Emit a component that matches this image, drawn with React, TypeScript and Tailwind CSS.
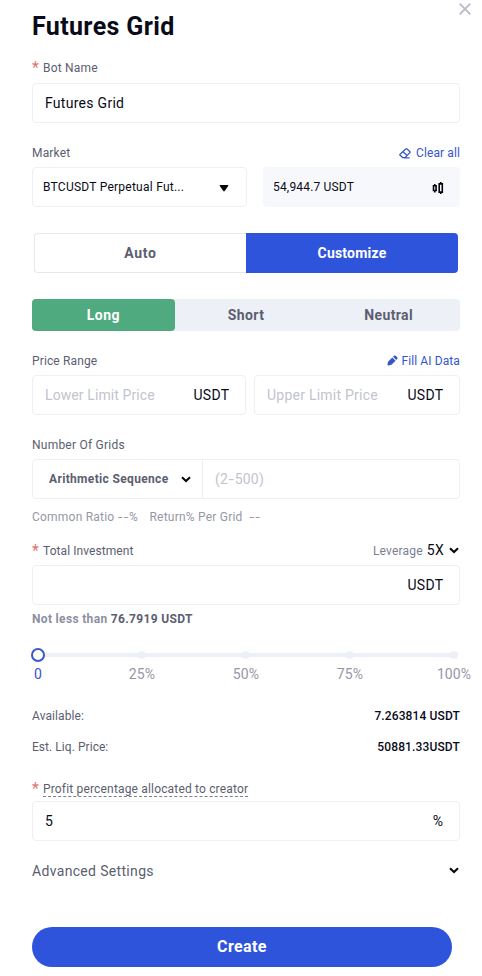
import type { ReactNode } from 'react';

const marks = ['0', '25%', '50%', '75%', '100%'];

function Chevron({ className = '' }: { className?: string }) {
  return (
    <svg viewBox="0 0 10 7" className={`w-2.5 h-[7px] ${className}`} fill="none" stroke="#05060f" strokeWidth="2">
      <path d="M1 1.2 5 5l4-3.8" />
    </svg>
  );
}

function Label({ children, required }: { children: ReactNode; required?: boolean }) {
  return (
    <span className="flex h-5 items-center text-xs leading-5 text-[#5b5e70]">
      {required && <span className="w-[11px] text-base text-[#e2746f]">*</span>}
      {children}
    </span>
  );
}

function Field({ children, className = '' }: { children?: ReactNode; className?: string }) {
  return (
    <div
      className={`flex h-10 items-center justify-between rounded border border-[#eeeff3] text-sm text-[#0a0b18] ${className}`}
    >
      {children}
    </div>
  );
}

function Unit({ children }: { children: ReactNode }) {
  return <span className="-mr-[0.25px] tracking-[0.25px]">{children}</span>;
}

export default function App() {
  return (
    <div className="h-[976px] w-[482px] overflow-hidden bg-white pl-8 font-['Roboto','Noto_Sans',sans-serif] text-[#0a0b18]">
      <button className="absolute left-[459px] top-[3px]" aria-label="Close">
        <svg viewBox="0 0 12 12" className="h-3 w-3" fill="none" stroke="#b9bbc9" strokeWidth="1.8">
          <path d="M.7.7l10.6 10.6M11.3.7.7 11.3" />
        </svg>
      </button>

      <div className="w-[428px]">
        <h1 className="pt-[11px] text-[25px] font-bold leading-8 tracking-[0.36px]">Futures Grid</h1>

        {/* Bot name */}
        <div className="mt-[15px]">
          <Label required>
            <span className="tracking-[0.2px]">Bot Name</span>
          </Label>
          <Field className="mt-[5px] px-3">
            <span className="tracking-[0.28px]">Futures Grid</span>
          </Field>
        </div>

        {/* Market */}
        <div className="mt-5">
          <div className="flex justify-between">
            <Label>
              <span className="tracking-[0.17px]">Market</span>
            </Label>
            <button className="flex h-5 items-center text-xs text-[#3556c9]">
              <svg viewBox="0 0 12 11" className="mr-[5px] h-[11px] w-3" fill="none" stroke="currentColor" strokeWidth="1.3">
                <path d="M1.1 6.2 6.7 1.1q.7-.6 1.4 0l2.6 2.4q.7.7 0 1.4L5.9 9.6H3.7L1.1 7.3q-.5-.5 0-1.1zM3.9 3.7l4.3 3.9M5 9.9h5.6" />
              </svg>
              <span className="tracking-[0.1px]">Clear all</span>
            </button>
          </div>
          <div className="mt-1 flex justify-between text-xs">
            <Field className="w-[215px] pl-2.5 pr-[18px]">
              <span className="text-xs tracking-[0.25px]">BTCUSDT Perpetual Fut...</span>
              <svg viewBox="0 0 10 7" className="-mr-px mt-0.5 h-[7px] w-2.5 fill-[#05060f]">
                <path d="M1.2 0h7.6q1 .1.4.9L5.7 6q-.7.9-1.4 0L.8.9Q.2.1 1.2 0z" />
              </svg>
            </Field>
            <div className="flex h-10 w-[197px] items-center justify-between rounded bg-[#f7f8fb] pl-2.5 pr-4">
              <span className="tracking-[0.18px]">54,944.7 USDT</span>
              <svg viewBox="0 0 12 12" className="mt-0.5 h-3 w-3" fill="none" stroke="#05060f" strokeWidth="1.6">
                <path d="M1.5 3.7h2.6v4.8H1.5zM2.8 1.9v1.8M2.8 8.5v1.9M7.2 1.9h3.1v8.2H7.2zM8.75.1v1.8M8.75 10.1v1.8" />
              </svg>
            </div>
          </div>
        </div>

        {/* Mode tabs */}
        <div className="ml-0.5 mt-[26px] flex h-10 w-[424px] text-sm font-bold">
          <button className="w-[212px] rounded-l border border-r-0 border-[#e6e8f0] tracking-[0.7px] text-[#5b5e70]">Auto</button>
          <button className="w-[212px] rounded-r bg-[#2f54dc] tracking-[0.2px] text-white">Customize</button>
        </div>

        {/* Direction */}
        <div className="mt-[26px] grid h-8 grid-cols-3 rounded bg-[#eef0f8] text-sm font-bold tracking-[0.4px] text-[#5b5e70]">
          <button className="rounded bg-[#50aa7f] text-white">Long</button>
          <button>Short</button>
          <button>Neutral</button>
        </div>

        {/* Price range */}
        <div className="mt-5">
          <div className="flex justify-between">
            <Label>
              <span className="tracking-[0.13px]">Price Range</span>
            </Label>
            <button className="flex h-5 items-center text-xs text-[#3556c9]">
              <svg viewBox="0 0 11 11" className="mb-0.5 mr-1 h-[11px] w-[11px] fill-current">
                <path d="M.5 9.8.9 7.3Q1 6.7 1.5 6.2L5.3 2.5 8.6 5.7 4.7 9.5q-.4.4-1 .5l-2.5.5q-.8.1-.7-.7zM6 1.8 7.1.8q.8-.7 1.6 0l1.5 1.5q.8.8 0 1.6L9.3 5z" />
              </svg>
              <span className="tracking-[0.1px]">Fill AI Data</span>
            </button>
          </div>
          <div className="mt-1 flex gap-2">
            <Field className="w-[214px] pl-3 pr-4">
              <span className="tracking-[0.1px] text-[#c2c4cf]">Lower Limit Price</span>
              <Unit>USDT</Unit>
            </Field>
            <Field className="w-[206px] pl-3 pr-4">
              <span className="tracking-[0.24px] text-[#c2c4cf]">Upper Limit Price</span>
              <Unit>USDT</Unit>
            </Field>
          </div>
        </div>

        {/* Grids */}
        <div className="mt-5">
          <Label>
            <span className="tracking-[0.23px]">Number Of Grids</span>
          </Label>
          <Field className="mt-1">
            <div className="flex h-full w-[170px] items-center justify-between border-r border-[#eeeff3] pl-4 pr-[11px]">
              <span className="text-xs font-bold tracking-[0.34px] text-[#5b5e70]">Arithmetic Sequence</span>
              <Chevron />
            </div>
            <span className="flex-1 pl-3 tracking-[0.2px] text-[#c2c4cf]">
              (2<span className="font-['Inter']">-</span>500)
            </span>
          </Field>
          <p className="mt-2 flex h-5 items-center text-xs tracking-[0.22px] text-[#9597a6]">
            <span className="w-[117.5px]">
              Common Ratio <span className="font-['Inter']">--</span>%
            </span>
            <span>
              Return% Per Grid&nbsp; <span className="font-['Inter']">--</span>
            </span>
          </p>
        </div>

        {/* Investment */}
        <div className="mt-3.5">
          <div className="flex justify-between">
            <Label required>
              <span className="tracking-[0.07px]">Total Investment</span>
            </Label>
            <div className="flex h-5 items-center text-xs text-[#7b7e90]">
              <span className="tracking-[0.2px]">Leverage</span>
              <span className="mb-0.5 ml-1 text-sm tracking-[0.25px] text-[#0a0b18]">5X</span>
              <Chevron className="mb-0.5 ml-[5px] mr-px" />
            </div>
          </div>
          <Field className="mt-1 pl-3 pr-4">
            <span />
            <Unit>USDT</Unit>
          </Field>
          <p className="mt-1 h-5 text-xs font-bold leading-5 tracking-[0.33px] text-[#8c8fa0]">
            Not less than <span className="text-[#5b5e70]">76.7919 USDT</span>
          </p>
        </div>

        {/* Amount slider */}
        <div className="mt-[19px] w-[428px] px-1.5">
          <div className="flex h-3.5 w-[416px] items-center bg-[linear-gradient(#eef0f8,#eef0f8)] bg-[length:100%_4px] bg-center bg-no-repeat">
            {marks.map((mark, i) => (
              <span key={mark} className={i === 4 ? 'w-0' : 'w-[104px]'}>
                {i === 0 ? (
                  <span className="-ml-[7px] block h-3.5 w-3.5 rounded-full border-2 border-[#3d58c6] bg-white" />
                ) : (
                  <span className="-ml-1 block h-2 w-2 rounded-full bg-[#eef0f8]" />
                )}
              </span>
            ))}
          </div>
          <div className="mt-0.5 flex h-5 w-[416px] justify-between text-sm leading-5 text-[#9597a6]">
            {marks.map((mark, i) => (
              <span key={mark} className={`flex w-0 justify-center tracking-[0.1px] ${i === 0 ? 'text-[#3556c9]' : ''}`}>
                {mark}
              </span>
            ))}
          </div>
        </div>

        <dl className="mt-[22px] text-xs leading-5">
          <div className="flex justify-between text-[#5b5e70]">
            <dt className="tracking-[0.1px]">Available:</dt>
            <dd className="font-medium tracking-[0.12px] text-[#0a0b18]">7.263814 USDT</dd>
          </div>
          <div className="mt-[11px] flex justify-between text-[#5b5e70]">
            <dt className="tracking-[0.05px]">Est. Liq. Price:</dt>
            <dd className="font-medium tracking-[0.14px] text-[#0a0b18]">50881.33USDT</dd>
          </div>
        </dl>

        {/* Creator share */}
        <div className="mt-[22px]">
          <Label required>
            <span className="border-b border-dashed border-[#7b7e90] pt-px leading-[14px] tracking-[0.17px]">
              Profit percentage allocated to creator
            </span>
          </Label>
          <Field className="mt-0.5 pl-3 pr-4">
            <span>5</span>
            <span>%</span>
          </Field>
        </div>

        <button className="mt-5 flex h-5 w-full items-center justify-between text-sm text-[#5b5e70]">
          <span className="tracking-[0.33px]">Advanced Settings</span>
          <Chevron className="mb-0.5 mr-px" />
        </button>

        <button className="mt-[46px] h-10 w-[420px] rounded-full bg-[#2f54dc] text-base font-bold tracking-[0.4px] text-white">
          Create
        </button>
      </div>
    </div>
  );
}
